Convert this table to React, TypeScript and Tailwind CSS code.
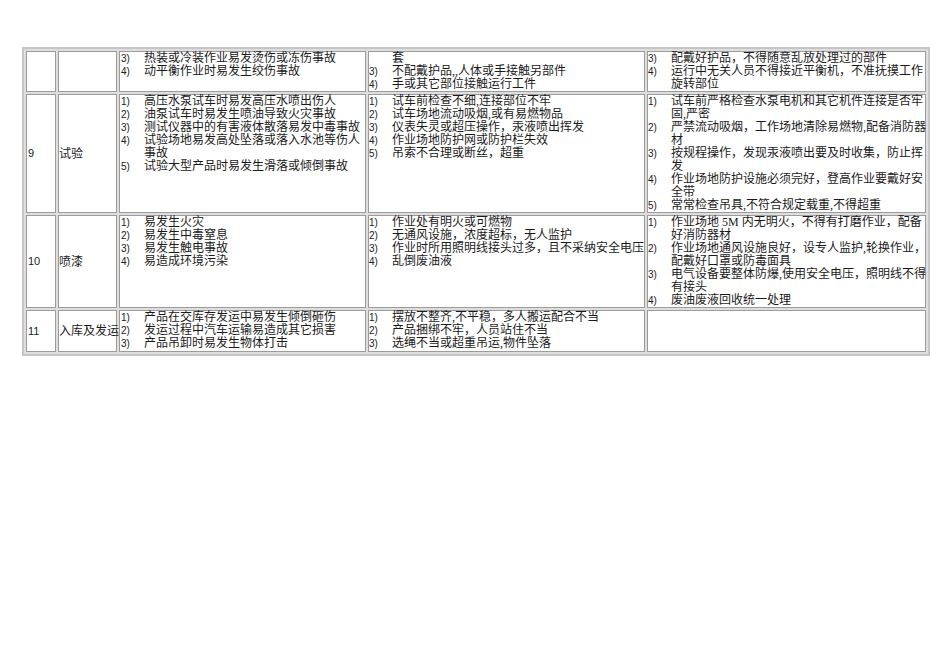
type Item = [string, string[]];

type Row = {
    no: string;
    name: string;
    h: number;
    hazards: Item[];
    causes: Item[];
    measures: Item[];
};

const rows: Row[] = [
    {
        no: '',
        name: '',
        h: 41,
        hazards: [
            ['3)', ['热装或冷装作业易发烫伤或冻伤事故']],
            ['4)', ['动平衡作业时易发生绞伤事故']],
        ],
        causes: [
            ['', ['套']],
            ['3)', ['不配戴护品,,人体或手接触另部件']],
            ['4)', ['手或其它部位接触运行工件']],
        ],
        measures: [
            ['3)', ['配戴好护品，不得随意乱放处理过的部件']],
            ['4)', ['运行中无关人员不得接近平衡机，不准抚摸工作', '旋转部位']],
        ],
    },
    {
        no: '9',
        name: '试验',
        h: 119,
        hazards: [
            ['1)', ['高压水泵试车时易发高压水喷出伤人']],
            ['2)', ['油泵试车时易发生喷油导致火灾事故']],
            ['3)', ['测试仪器中的有害液体散落易发中毒事故']],
            ['4)', ['试验场地易发高处坠落或落入水池等伤人', '事故']],
            ['5)', ['试验大型产品时易发生滑落或倾倒事故']],
        ],
        causes: [
            ['1)', ['试车前检查不细,连接部位不牢']],
            ['2)', ['试车场地流动吸烟,或有易燃物品']],
            ['3)', ['仪表失灵或超压操作，汞液喷出挥发']],
            ['4)', ['作业场地防护网或防护栏失效']],
            ['5)', ['吊索不合理或断丝，超重']],
        ],
        measures: [
            ['1)', ['试车前严格检查水泵电机和其它机件连接是否牢', '固,严密']],
            ['2)', ['严禁流动吸烟，工作场地清除易燃物,配备消防器', '材']],
            ['3)', ['按规程操作，发现汞液喷出要及时收集，防止挥', '发']],
            ['4)', ['作业场地防护设施必须完好，登高作业要戴好安', '全带']],
            ['5)', ['常常检查吊具,不符合规定载重,不得超重']],
        ],
    },
    {
        no: '10',
        name: '喷漆',
        h: 92,
        hazards: [
            ['1)', ['易发生火灾']],
            ['2)', ['易发生中毒窒息']],
            ['3)', ['易发生触电事故']],
            ['4)', ['易造成环境污染']],
        ],
        causes: [
            ['1)', ['作业处有明火或可燃物']],
            ['2)', ['无通风设施，浓度超标，无人监护']],
            ['3)', ['作业时所用照明线接头过多，且不采纳安全电压']],
            ['4)', ['乱倒废油液']],
        ],
        measures: [
            ['1)', ['作业场地 5M 内无明火，不得有打磨作业，配备', '好消防器材']],
            ['2)', ['作业场地通风设施良好，设专人监护,轮换作业，', '配戴好口罩或防毒面具']],
            ['3)', ['电气设备要整体防爆,使用安全电压，照明线不得', '有接头']],
            ['4)', ['废油废液回收统一处理']],
        ],
    },
    {
        no: '11',
        name: '入库及发运',
        h: 42,
        hazards: [
            ['1)', ['产品在交库存发运中易发生倾倒砸伤']],
            ['2)', ['发运过程中汽车运输易造成其它损害']],
            ['3)', ['产品吊卸时易发生物体打击']],
        ],
        causes: [
            ['1)', ['摆放不整齐,不平稳，多人搬运配合不当']],
            ['2)', ['产品捆绑不牢，人员站住不当']],
            ['3)', ['选绳不当或超重吊运,物件坠落']],
        ],
        measures: [],
    },
];

const cjk = "font-['Liberation_Serif','Noto_Sans_CJK_SC',serif]";

function ItemList({ items }: { items: Item[] }) {
    return (
        <div className="flex flex-col">
            {items.map(([mark, lines], i) => (
                <div key={i} className="flex">
                    <span className="w-[23px] shrink-0 font-['Liberation_Sans',sans-serif] text-[10px] leading-[13px]">
                        {mark}
                    </span>
                    <div className="flex flex-col whitespace-nowrap">
                        {lines.map((l, j) => (
                            <span key={j} className="text-[12px] leading-[13px]">
                                {l}
                            </span>
                        ))}
                    </div>
                </div>
            ))}
        </div>
    );
}

const cell = 'border border-[#9c9c9c] bg-white p-0 align-top';

export default function App() {
    return (
        <div className={`min-h-[672px] bg-white pl-[22px] pt-[47px] text-[#1a1a1a] ${cjk}`}>
            <table className="w-[908px] table-fixed border-separate border-spacing-[2px] border-2 border-[#c4c4c4] bg-[#dedede]">
                <colgroup>
                    <col className="w-[30px]" />
                    <col className="w-[59px]" />
                    <col className="w-[247px]" />
                    <col className="w-[277px]" />
                    <col />
                </colgroup>
                <tbody>
                    {rows.map((r, i) => (
                        <tr key={i} style={{ height: r.h }}>
                            <td className={`${cell} !align-middle pl-[1px] font-['Liberation_Sans',sans-serif] text-[11px]`}>
                                {r.no}
                            </td>
                            <td className={`${cell} !align-middle whitespace-nowrap text-[12px]`}>{r.name}</td>
                            <td className={`${cell} overflow-visible pl-[1px]`}>
                                <ItemList items={r.hazards} />
                            </td>
                            <td className={`${cell}`}>
                                <ItemList items={r.causes} />
                            </td>
                            <td className={`${cell}`}>
                                <ItemList items={r.measures} />
                            </td>
                        </tr>
                    ))}
                </tbody>
            </table>
        </div>
    );
}
